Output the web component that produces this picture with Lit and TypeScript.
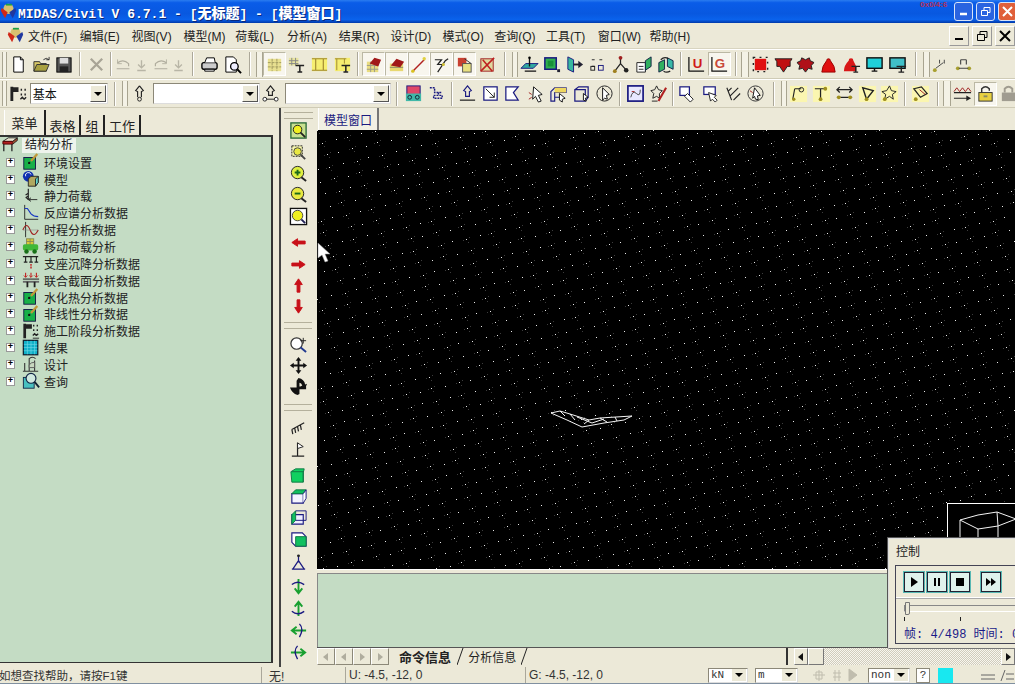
import {LitElement, css, html, svg} from 'lit';
import {customElement} from 'lit/decorators.js';

const BLUE = '#1a1a80';
const arrowPath = 'M3 10 9 6v2.500h8v3H9V14z';

// every icon lives in a 20x20 box
const icons: Record<string, unknown> = {
  doc: svg`<path d="M5 2h7l3 3v13H5z" fill="#fff" stroke="#000"/><path d="M12 2v3h3" fill="none" stroke="#000"/>`,
  open: svg`<path d="M2 7h6l1 2h6v8H2z" fill="#d8c868" stroke="#333"/><path d="M2 17l3-7h13l-3 7z" fill="#a8a040" stroke="#333"/><path d="M12 5q3-3 6 0m0-3v3h-3" fill="none" stroke="#333"/>`,
  save: svg`<rect x="3" y="3" width="15" height="15" fill="#555" stroke="#000"/><rect x="6" y="3" width="9" height="6" fill="#ddd"/><rect x="6" y="12" width="9" height="6" fill="#222"/>`,
  cut: svg`<path d="M4 4l12 12M16 4L4 16" stroke="#a8a496" stroke-width="2.400"/>`,
  undo: svg`<path d="M3 8q7-5 13 1v3M2 15h15" fill="none" stroke="#b0ad9e" stroke-width="1.400"/><path d="M3 4v5h5" fill="none" stroke="#b0ad9e"/>`,
  dn: svg`<path d="M10 5v8M6 10l4 4 4-4M5 17h10" fill="none" stroke="#b8b5a6" stroke-width="1.600"/>`,
  redo: svg`<path d="M17 8q-7-5-13 1v3M3 15h15" fill="none" stroke="#b0ad9e" stroke-width="1.400"/><path d="M17 4v5h-5" fill="none" stroke="#b0ad9e"/>`,
  print: svg`<rect x="2" y="8" width="16" height="7" rx="2" fill="#ccc" stroke="#000" stroke-width="1.400"/><path d="M5 8l2-5h8l1 5M5 15h10v2H5z" fill="#fff" stroke="#000"/>`,
  preview: svg`<path d="M3 2h8l3 3v13H3z" fill="#fff" stroke="#000"/><circle cx="12" cy="12" r="4" fill="#eef" stroke="#000" stroke-width="1.400"/><path d="M15 15l4 4" stroke="#000" stroke-width="2"/>`,
  grid1: svg`<path d="M3 4h14v13H3z" fill="#e8e090"/><path d="M3 8h14M3 12.500h14M7.500 4v13M12.500 4v13" stroke="#a09a60" stroke-dasharray="3 1"/>`,
  gridT: svg`<path d="M2 3h10v8H2z" fill="#e8e4a0"/><path d="M2 6h10M2 9h10M5 3v8M9 3v8" stroke="#888"/><path d="M9 11h9M13.500 11v7M11 18h5" stroke="#222" stroke-width="1.600"/>`,
  frame1: svg`<rect x="2" y="3" width="16" height="14" fill="#f6ee70"/><path d="M2 4h16M2 16h16M6 4v12M14 4v12" stroke="#a08830" stroke-width="1.200"/>`,
  frameT: svg`<rect x="2" y="3" width="16" height="14" fill="#f6ee70"/><path d="M2 4h12M4 4v12M12 4v5" stroke="#a08830"/><path d="M9 11h9M13.500 11v7M11 18h5" stroke="#222" stroke-width="1.600"/>`,
  redgrid: svg`<path d="M3 7h12v11H3z" fill="#e8dc80"/><path d="M3 11h12M3 15h12M7 7v11M11 7v11" stroke="#998"/><path d="M6 9l5-6 7 2-3 7z" fill="#a01818"/>`,
  redgrid2: svg`<path d="M3 9h14v8H3z" fill="#e8d870"/><path d="M3 13h14" stroke="#886"/><path d="M4 11l6-7 8 3-4 6z" fill="#a01818"/>`,
  wand: svg`<path d="M4 17L16 5" stroke="#b02020" stroke-width="1.500"/><circle cx="4" cy="17" r="1.800" fill="#d8c020"/><circle cx="16" cy="4" r="1.800" fill="#e0d040"/>`,
  wand2: svg`<path d="M3 5h7l-4 5h6M6 18l8-12 3-2" fill="none" stroke="#222" stroke-width="1.300"/><circle cx="12" cy="10" r="1.600" fill="#d0c030"/>`,
  boxT: svg`<rect x="3" y="3" width="9" height="9" fill="#c84030"/><rect x="8" y="9" width="9" height="9" fill="#e8e080" stroke="#555"/><path d="M10 4l7 5" stroke="#333"/>`,
  boxX: svg`<rect x="3" y="4" width="13" height="13" fill="#e0d8a0" stroke="#a02020"/><path d="M3 17L17 3M5 5l10 12" stroke="#c02020" stroke-width="1.600"/>`,
  plane: svg`<path d="M1 14l5-5h13l-5 5z" fill="#30a8a0" stroke="${BLUE}"/><path d="M10 2v10M5 17h12" stroke="#111" stroke-width="1.400"/><circle cx="10" cy="3" r="1.300"/>`,
  cubeG: svg`<rect x="3" y="3" width="12" height="12" fill="#30b050" stroke="${BLUE}" stroke-width="1.600"/><rect x="6" y="6" width="6" height="6" fill="#189038"/><rect x="16" y="15" width="3" height="3" fill="#223"/>`,
  prism: svg`<path d="M3 2l6 3v13l-6-3z" fill="#38b8a0" stroke="${BLUE}"/><path d="M9 10h6" stroke="#222" stroke-width="2"/><path d="M14 6l5 4-5 4z" fill="#223"/>`,
  dots: svg`<path d="M4 5h3M12 5h3M4 12h3" stroke="#333" stroke-width="1.300"/><rect x="3" y="12" width="4" height="4" fill="none" stroke="#222"/><rect x="11" y="11" width="5" height="5" fill="none" stroke="${BLUE}"/>`,
  tree3: svg`<path d="M10 3v6M10 9l-6 8M10 9l7 8" stroke="#222" stroke-width="1.300"/><circle cx="10" cy="3" r="2" fill="#a02020"/><circle cx="4" cy="17" r="2" fill="#a08020"/><circle cx="16" cy="16" r="2.400" fill="#222"/>`,
  docG: svg`<path d="M3 8h9v10H3z" fill="#fff" stroke="#222"/><path d="M5 12h5M5 15h5" stroke="#222"/><path d="M12 6l6-4v10l-6 4z" fill="#30b060" stroke="#124"/>`,
  cubeRot: svg`<path d="M3 8l6-3v10l-6 3z" fill="#30b060" stroke="#124"/><path d="M12 3l6 3v9l-6-3z" fill="#38b8a8" stroke="#124"/><path d="M5 5q4-4 8-1M15 17q-4 2-7 0" fill="none" stroke="#222" stroke-width="1.300"/>`,
  U: svg`<path d="M2 2v15h16" fill="none" stroke="#111" stroke-width="1.300"/><text x="6" y="14" font-family="Liberation Sans" font-weight="700" font-size="14" fill="#d01818">U</text>`,
  G: svg`<path d="M2 2v15h16" fill="none" stroke="#111" stroke-width="1.300"/><text x="5" y="14" font-family="Liberation Sans" font-weight="700" font-size="14" fill="#c84838">G</text>`,
  redSq: svg`<rect x="4" y="4" width="12" height="12" fill="#e01010"/><path d="M2.500 2.500h15v15h-15z" fill="none" stroke="#222" stroke-width="1.500" stroke-dasharray="2 4.500"/>`,
  redArrow: svg`<path d="M1 4h18l-2 3v5h-3l-4 6-4-6H3V7z" fill="#c01010" stroke="#222"/>`,
  redBurst: svg`<path d="M1 8l4-2 1-3 4 2 4-2 1 3 4 2-3 3 1 4-4-1-3 4-3-4-4 1 1-4z" fill="#b01018" stroke="#222"/>`,
  bell: svg`<path d="M8 6a2 2 0 0 1 4 0q5 6 5 12H3q0-6 5-12z" fill="#e01010" stroke="#900"/>`,
  bellT: svg`<path d="M7 6a2.500 2.500 0 0 1 5 0l3 6v5H2q0-6 5-11z" fill="#d81818"/><path d="M10 12h9M14.500 12v6M12 18h5" stroke="#222" stroke-width="1.500"/>`,
  screen: svg`<rect x="2" y="3" width="16" height="11" fill="#20d0d8" stroke="#111" stroke-width="1.500"/><path d="M7 17h6M10 14v3" stroke="#111" stroke-width="1.500"/>`,
  screenT: svg`<rect x="2" y="3" width="16" height="11" fill="#40c0c8" stroke="#111" stroke-width="1.500"/><path d="M9 12h10M14 12v6M11 18h6" stroke="#222" stroke-width="1.500"/>`,
  link1: svg`<circle cx="4" cy="16" r="2" fill="#a8a030"/><path d="M5 14l8-6M9 5v4M14 5v4" stroke="#444"/>`,
  link2: svg`<circle cx="4" cy="14" r="2" fill="#a8a030"/><circle cx="16" cy="14" r="2" fill="#a8a030"/><path d="M5 14h10M7 5v5M13 5v5M7 5h6" stroke="#444" stroke-width="1.200"/>`,
  hframe: svg`<path d="M3 3v15M3 7h7M3 5h7" stroke="#222" stroke-width="3"/><path d="M13 5v2M17 5v2M13 10v2M17 10v2M12 16l2-2 2 2M16 16l2-2" stroke="#222" stroke-width="1.500" fill="none"/>`,
  nodeArrow: svg`<path d="M10 2l4 5-2 1v6M10 2L6 7l2 1v6" fill="none" stroke="#222" stroke-width="1.200"/><circle cx="10" cy="16" r="2" fill="none" stroke="#222"/>`,
  nodes: svg`<path d="M10 2l4 5-2 1v4H8V8L6 7z" fill="none" stroke="#222" stroke-width="1.200"/><path d="M5 16h10" stroke="#222"/><circle cx="4" cy="16" r="2" fill="#fff" stroke="#222"/><circle cx="16" cy="16" r="2" fill="#fff" stroke="#222"/>`,
  dualG: svg`<rect x="3" y="2" width="14" height="9" fill="#e04868" stroke="${BLUE}"/><rect x="2" y="10" width="16" height="8" fill="#40b8a8"/><circle cx="6" cy="14" r="2" fill="none" stroke="#123"/><circle cx="14" cy="14" r="2" fill="none" stroke="#123"/>`,
  tree: svg`<path d="M3 4h5v5h8M12 9v3M7 12h9v3H7z" fill="none" stroke="${BLUE}" stroke-width="1.500" stroke-dasharray="2 1"/>`,
  nodeB: svg`<path d="M10 2l4 5-2 1v5H8V8L6 7z" fill="none" stroke="${BLUE}" stroke-width="1.200"/><path d="M2 17h16" stroke="#222" stroke-width="1.300"/>`,
  boxArrow: svg`<rect x="3" y="3" width="14" height="14" fill="#fff" stroke="${BLUE}" stroke-width="1.300"/><path d="M5 5l9 9M14 9v5H9" fill="none" stroke="#222"/>`,
  flag: svg`<path d="M3 3h13l-5 6 5 8H3z" fill="#fff" stroke="${BLUE}" stroke-width="1.300"/>`,
  cur: svg`<path d="M8 3l9 8-4 1 3 6-3 1-3-6-3 3z" fill="#fff" stroke="#111"/><path d="M3 9l3 2M3 16l3-2" stroke="#a02020"/>`,
  boxes: svg`<path d="M2 8l4-4h12v5H6v9H2zM6 9v5h6" fill="none" stroke="${BLUE}" stroke-width="1.200"/><path d="M6 4h12v5H6z" fill="#f0d860"/><path d="M11 10l6 5-3 1v3l-3-2z" fill="#fff" stroke="#111"/>`,
  cube: svg`<path d="M3 6h11v12H3zM3 6l4-3h10v11l-3 4" fill="none" stroke="${BLUE}" stroke-width="1.300"/><path d="M12 10l5 4-3 1 1 3-3-1z" fill="#fff" stroke="#111"/>`,
  circCur: svg`<circle cx="10" cy="10" r="8" fill="none" stroke="#222"/><path d="M8 4l7 7-3 1 1 4-3-1-2 2z" fill="#fff" stroke="#111"/>`,
  pen: svg`<rect x="2" y="2" width="16" height="16" fill="#e8e8ff" stroke="${BLUE}" stroke-width="1.800"/><path d="M5 14q2-8 6-4t4-4" fill="none" stroke="#444"/><path d="M6 8h3" stroke="#a02020"/>`,
  penStar: svg`<path d="M8 2l2 4 4 1-3 3v5l-3-2-4 2 1-5-3-3 4-1z" fill="none" stroke="#222"/><path d="M10 18L18 4" stroke="#b02020" stroke-width="2.200"/><path d="M3 18h6" stroke="#222"/>`,
  sq1: svg`<rect x="2" y="3" width="10" height="9" fill="#fff" stroke="${BLUE}" stroke-width="1.300"/><path d="M10 10l6 6-3 3-6-6z" fill="#fff" stroke="#222"/>`,
  sq2: svg`<rect x="3" y="3" width="12" height="8" fill="#fff" stroke="${BLUE}" stroke-width="1.300"/><path d="M8 9l8 3-2 2 3 3-2 2-3-3-2 2z" fill="#fff" stroke="#222"/>`,
  pins: svg`<path d="M4 8l4-4M6 13l9-9M10 17l7-7M3 4l5 13" stroke="#222" stroke-width="1.200" fill="none"/>`,
  circDot: svg`<circle cx="10" cy="10" r="8" fill="none" stroke="#333"/><path d="M9 4l6 8-3 .5 1 4-3-.5-1-3-2 2z" fill="#fff" stroke="#111"/><path d="M4 7l3 2" stroke="#a02020"/>`,
  yl1: svg`<rect x="1" y="2" width="18" height="17" fill="#fbf6b0"/><path d="M4 16l2-11M6 5h7" stroke="#222" stroke-width="1.200"/><circle cx="13" cy="6" r="2.400" fill="none" stroke="#222"/><circle cx="5" cy="16" r="1.800" fill="#a09020"/>`,
  yl2: svg`<rect x="1" y="2" width="18" height="17" fill="#fbf6b0"/><path d="M3 5h10M9 5v10" stroke="#222" stroke-width="1.300"/><circle cx="14" cy="5" r="2" fill="#a09020"/><circle cx="9" cy="16" r="2" fill="#a09020"/>`,
  arrows2: svg`<path d="M2 6h16M2 14h16M5 3L2 6l3 3M15 3l3 3-3 3" fill="none" stroke="#222" stroke-width="1.300"/><circle cx="4" cy="14" r="2" fill="#a09020"/><circle cx="16" cy="14" r="2" fill="#a09020"/>`,
  yl3: svg`<rect x="1" y="2" width="18" height="17" fill="#fbf6b0"/><path d="M5 4l4 12 7-9z" fill="none" stroke="#222" stroke-width="1.500"/><circle cx="9" cy="16" r="2" fill="#a09020"/>`,
  yl4: svg`<rect x="1" y="2" width="18" height="17" fill="#fbf6b0"/><path d="M10 2l2 5 5 1-4 3 1 5-4-3-5 3 1-5-4-3 5-1z" fill="none" stroke="#222"/><circle cx="5" cy="16" r="2" fill="#a09020"/>`,
  yl5: svg`<rect x="1" y="2" width="18" height="17" fill="#fbf6b0"/><path d="M3 5l8-2 6 7-7 4z" fill="none" stroke="#222" stroke-width="1.300"/><circle cx="5" cy="16" r="2" fill="#a09020"/><path d="M9 6l6 5" stroke="#a02020"/>`,
  waves: svg`<path d="M1 8l3-4 3 4 3-4 3 4 3-4 3 4" fill="none" stroke="#a02020"/><path d="M1 9h18M1 15h15" stroke="#222" stroke-width="1.300"/><path d="M14 12l5 3-5 3z" fill="#222"/>`,
  lock: svg`<rect x="3" y="9" width="14" height="9" fill="#e8d040" stroke="#333"/><path d="M6 9V5q4-4 8 0v2" fill="none" stroke="#333" stroke-width="1.500"/><rect x="8" y="12" width="4" height="2" fill="#886"/>`,
  lockG: svg`<rect x="3" y="9" width="14" height="9" fill="#a09c90"/><path d="M6 9V5q4-4 8 0v4" fill="none" stroke="#a09c90" stroke-width="2"/>`,

  zoomFit: svg`<rect x="2" y="2" width="16" height="16" fill="#c8e090" stroke="#286838" stroke-width="1.400"/><circle cx="9" cy="9" r="4.500" fill="#f0f020" stroke="#222"/><path d="M12 12l5 5" stroke="#222" stroke-width="2"/>`,
  zoomWin: svg`<rect x="3" y="3" width="11" height="11" fill="#f8f8b0" stroke="#222" stroke-dasharray="2 1"/><circle cx="9" cy="9" r="4" fill="#e8e840" stroke="#444"/><path d="M12 12l5 5" stroke="#444" stroke-width="2"/>`,
  zoomIn: svg`<circle cx="9" cy="9" r="6.500" fill="#e0f040" stroke="#222"/><path d="M6 9h6M9 6v6" stroke="#186818" stroke-width="2"/><path d="M13 14l5 4" stroke="#222" stroke-width="2"/>`,
  zoomOut: svg`<circle cx="9" cy="9" r="6.500" fill="#e8e840" stroke="#222"/><path d="M6 9h6" stroke="#186818" stroke-width="2"/><path d="M13 14l5 4" stroke="#222" stroke-width="2"/>`,
  zoomAll: svg`<rect x="1.500" y="1.500" width="17" height="17" fill="#fff" stroke="#111" stroke-width="1.400"/><circle cx="9" cy="9" r="5.500" fill="#f0f020" stroke="#444"/><path d="M13 13l4 4" stroke="#225" stroke-width="2"/>`,
  aLeft: svg`<path d="${arrowPath}" fill="#c81018" stroke="#c81018"/>`,
  aRight: svg`<path d="${arrowPath}" fill="#c81018" stroke="#c81018" transform="rotate(180 10 10)"/>`,
  aUp: svg`<path d="${arrowPath}" fill="#c81018" stroke="#c81018" transform="rotate(90 10 10)"/>`,
  aDown: svg`<path d="${arrowPath}" fill="#c81018" stroke="#c81018" transform="rotate(-90 10 10)"/>`,
  zoomPlus: svg`<circle cx="8" cy="9" r="6" fill="#fff" stroke="#333" stroke-width="1.300"/><path d="M12 13l6 5" stroke="#223a90" stroke-width="2"/><path d="M15 3v6M12 6h6" stroke="#222"/>`,
  pan: svg`<path d="M10 1l3 4h-2v4h4V7l4 3-4 3v-2h-4v4h2l-3 4-3-4h2v-4H5v2l-4-3 4-3v2h4V5H7z" fill="#111"/>`,
  rotate: svg`<path d="M10 1q6 1 7 7l2-1-2 5-5-2 2-1q-1-3-3-3v4h7v3h-7v5l-2 1q-6-2-8-8h7V4z" fill="#111"/>`,
  brush: svg`<path d="M3 11l13-7M3 11l1 5M6 9.500l1 5M9 8l1 5M12 6.500l1 5" stroke="#222" stroke-width="1.300"/>`,
  flagBase: svg`<path d="M9 3v14M3 17h13" stroke="#222" stroke-width="1.300"/><path d="M9 3l6 4-6 2z" fill="#fff" stroke="#222"/>`,
  cubeFull: svg`<path d="M2 6l5-3h9l-1 4v10H3z" fill="#10d060" stroke="#174"/><path d="M3 6h12v11" fill="none" stroke="#174"/>`,
  cubeTop: svg`<path d="M3 7h12v10H3z" fill="#f4f4ff" stroke="${BLUE}" stroke-width="1.200"/><path d="M3 7l4-4h11l-3 4z" fill="#10c060" stroke="#174"/><path d="M15 7l3-4v9l-3 5" fill="#fff" stroke="${BLUE}"/>`,
  cubeSide: svg`<path d="M3 7h12v10H3z" fill="#eef" stroke="${BLUE}" stroke-width="1.200"/><path d="M3 7l4-4v10l-4 4z" fill="#10c060" stroke="#174"/><path d="M7 3h11v10H7" fill="none" stroke="${BLUE}"/>`,
  cubeFront: svg`<path d="M3 3h11l4 4v10H7l-4-4z" fill="#fff" stroke="${BLUE}" stroke-width="1.200"/><path d="M7 7h11v10H7z" fill="#10c060" stroke="#174"/>`,
  person: svg`<path d="M10 2v8M10 8l-6 9M10 8l6 9M3 17h14" fill="none" stroke="${BLUE}" stroke-width="1.300"/><circle cx="10" cy="3" r="1.500" fill="#222"/>`,
  axisG1: svg`<path d="M10 2v14M6 12l4 5 4-5" fill="none" stroke="#18a030" stroke-width="2"/><path d="M3 8q6-5 13 0" fill="none" stroke="${BLUE}" stroke-width="1.400"/>`,
  axisG2: svg`<path d="M10 18V4M6 8l4-5 4 5" fill="none" stroke="#18a030" stroke-width="2"/><path d="M3 13q6 5 13 0" fill="none" stroke="${BLUE}" stroke-width="1.400"/>`,
  axisG3: svg`<path d="M18 10H4M8 6l-5 4 5 4" fill="none" stroke="#18a030" stroke-width="2"/><path d="M11 3q5 5 0 14" fill="none" stroke="${BLUE}" stroke-width="1.400"/>`,
  axisG4: svg`<path d="M2 10h14M12 6l5 4-5 4" fill="none" stroke="#18a030" stroke-width="2"/><path d="M9 3q-5 5 0 14" fill="none" stroke="${BLUE}" stroke-width="1.400"/>`,

  // tree icons
  tStruct: svg`<path d="M1 6l6-4h10l-5 4z" fill="#e8e4d0" stroke="#222"/><path d="M1 6h11v3H1z" fill="#b02020" stroke="#500"/><path d="M2 9v8M11 9v8" stroke="#222" stroke-width="1.400"/><path d="M12 6l5-4v3l-5 4" fill="#a05030" stroke="#222"/>`,
  tEnv: svg`<rect x="2" y="5" width="13" height="13" fill="#18b048" stroke="#114"/><circle cx="8" cy="11" r="1.300" fill="#111"/><path d="M10 9l7-8" stroke="#c09838" stroke-width="2.500"/>`,
  tModel: svg`<circle cx="7" cy="7" r="6" fill="#1030b0"/><path d="M4 7a3 3 0 0 1 6-2" fill="none" stroke="#fff"/><path d="M7 10l3-3h8v7l-3 4H7z" fill="#b0a860" stroke="#222"/><path d="M15 10v8l3-4V7z" fill="#60d8d0" stroke="#222"/>`,
  tStatic: svg`<path d="M7 2v12M4 9l3-2M4 12l3-2M7 14l-2-2" stroke="#222" stroke-width="1.300" fill="none"/><path d="M7 14h10" stroke="#222"/><path d="M10 12l-3 2 3 2" fill="none" stroke="#222"/>`,
  tSpec: svg`<path d="M3 1v16h15" fill="none" stroke="#222"/><path d="M3 5h3l4 6q3 3 8 3" fill="none" stroke="#1838c0" stroke-width="1.300"/>`,
  tTime: svg`<path d="M4 1v17" stroke="#222"/><path d="M1 10q4-10 8 0t9 0" fill="none" stroke="#a02020" stroke-width="1.300"/><path d="M1 10h17" stroke="#888" stroke-width=".6"/>`,
  tMove: svg`<rect x="5" y="2" width="8" height="7" fill="#d8c838" stroke="#885"/><path d="M5 5h8M9 2v7" stroke="#885"/><rect x="1" y="8" width="17" height="7" rx="2" fill="#40b838"/><circle cx="5" cy="16" r="2.500" fill="#187018"/><circle cx="14" cy="16" r="2.500" fill="#187018"/>`,
  tSettle: svg`<path d="M1 3h17M4 3v6M10 3v6M16 3v6M2 9h4M8 9h4M14 9h4" stroke="#222" stroke-width="1.300"/><path d="M10 11v5" stroke="#c02020" stroke-width="1.600" stroke-dasharray="2 1"/>`,
  tComp: svg`<path d="M4 2v5M10 2v5M16 2v5" stroke="#c02020" stroke-width="1.200"/><path d="M2 5l2 2 2-2M8 5l2 2 2-2M14 5l2 2 2-2" fill="none" stroke="#c02020"/><path d="M1 9h18" stroke="#444" stroke-width="1.400"/><path d="M1 12h18" stroke="#666" stroke-width="2"/><path d="M6 12v6M14 12v6" stroke="#222" stroke-width="2"/>`,
  tStage: svg`<path d="M3 2v16M3 6h8M3 4h8" stroke="#222" stroke-width="3"/><path d="M13 3v2M17 3v2M13 8v2M17 8v2M12 15l2-2 2 2M16 15l2-2" stroke="#222" stroke-width="1.500" fill="none"/><path d="M12 18h7" stroke="#222"/>`,
  tResult: svg`<rect x="1.500" y="1.500" width="16" height="16" fill="#10b0c8" stroke="#123" stroke-width="1.400"/><path d="M2 6h15M2 9.500h15M2 13h15M6 2v15M10 2v15M14 2v15" stroke="#70d8e8" stroke-width=".7"/>`,
  tDesign: svg`<path d="M1 18h17M3 18V9M8 18V4q4-3 7 0M14 18V6" fill="none" stroke="#333" stroke-width="1.200"/><path d="M8 11q2-3 6-3v6H8z" fill="#c8d8c0" stroke="#555"/>`,
  tQuery: svg`<rect x="1.500" y="6" width="12" height="12" fill="#48c0c0" stroke="#124"/><circle cx="10" cy="7" r="5.500" fill="#d0e8e0" stroke="#124" stroke-width="1.300"/><path d="M14 11l5 6" stroke="#123" stroke-width="2"/>`,
  logo: svg`<circle cx="10" cy="7" r="6" fill="#d8c070"/><path d="M2 6l7 5-3 7-5-9z" fill="#d02818"/><path d="M18 6l-7 5 4 7 4-9z" fill="#2038a0"/><path d="M7 2h7" stroke="#18a048" stroke-width="2"/>`,
};

const icon = (name: string, size = 18) =>
  html`<svg width=${size} height=${size} viewBox="0 0 20 20">${icons[name]}</svg>`;

const row1 = ['grip:5', 'doc', 'open', 'save', 'sep:10', 'cut', 'sep:6', 'undo~', 'dn~', 'redo~', 'dn~', 'sep:10', 'print', 'preview', 'sep:12',
  'grip:7', 'grid1*', 'gridT', 'frame1', 'frameT', 'sep:8', 'redgrid*', 'redgrid2*', 'wand*', 'wand2*', 'boxT*', 'boxX', 'sep:13',
  'grip:6', 'plane', 'cubeG', 'prism', 'dots', 'tree3', 'docG', 'cubeRot', 'sep:8', 'U', 'G*', 'sep:10',
  'grip:8', 'redSq', 'redArrow', 'redBurst', 'bell', 'bellT', 'screen', 'screenT', 'sep:14', 'grip:7', 'link1', 'link2'];

const row2 = ['grip:5', 'hframe', 'sel:78:基本', 'sep:14', 'grip:6', 'nodeArrow', 'gap:2', 'sel:107:', 'nodes', 'gap:3', 'sel:106:', 'sep:11',
  'dualG', 'tree', 'sep:8', 'nodeB', 'boxArrow', 'flag', 'cur', 'boxes', 'cube', 'circCur', 'sep:9', 'pen', 'penStar', 'sep:6',
  'sq1', 'sq2', 'pins', 'circDot', 'sep:14', 'grip:6', 'yl1', 'yl2', 'arrows2', 'yl3', 'yl4', 'sep:8', 'yl5', 'sep:11',
  'grip:8', 'waves', 'lock*', 'lockG'];

const menus = [['文件', 'F'], ['编辑', 'E'], ['视图', 'V'], ['模型', 'M'], ['荷载', 'L'], ['分析', 'A'], ['结果', 'R'], ['设计', 'D'], ['模式', 'O'], ['查询', 'Q'], ['工具', 'T'], ['窗口', 'W'], ['帮助', 'H']];

const treeRows = [['tEnv', '环境设置'], ['tModel', '模型'], ['tStatic', '静力荷载'], ['tSpec', '反应谱分析数据'], ['tTime', '时程分析数据'], ['tMove', '移动荷载分析'], ['tSettle', '支座沉降分析数据'], ['tComp', '联合截面分析数据'], ['tEnv', '水化热分析数据'], ['tEnv', '非线性分析数据'], ['tStage', '施工阶段分析数据'], ['tResult', '结果'], ['tDesign', '设计'], ['tQuery', '查询']];

// vertical toolbar: icon names, "gap:n" for blank space, "grip:n" for a band break
const sideBar = ['zoomFit', 'zoomWin', 'zoomIn', 'zoomOut', 'zoomAll', 'gap:5', 'aLeft', 'aRight', 'aUp', 'aDown', 'grip:16', 'zoomPlus', 'pan', 'rotate', 'grip:20',
  'brush', 'flagBase', 'gap:4', 'cubeFull', 'cubeTop', 'cubeSide', 'cubeFront', 'gap:2', 'person', 'gap:2', 'axisG1', 'gap:1', 'axisG2', 'gap:1', 'axisG3', 'axisG4'];

// the drawing grid: a skewed lattice with a little jitter, bright points plus dim compression specks
function gridDots() {
  let bright = '';
  let dim = '';
  for (let j = -30; j < 60; j++) {
    for (let i = -30; i < 80; i++) {
      const x = 13 * i + 4 * j + ((i * 7 + j * 13) % 3);
      const y = 12 * j - 3 * i + ((i * 5 + j * 3) % 2);
      if (x < 0 || y < 0 || x > 700 || y > 440) continue;
      bright += `M${x} ${y}h1v1h-1z`;
      if ((i + j * 2) % 2 === 0) dim += `M${x + 2} ${y + 3}h1v1h-1zM${x - 3} ${y + 1}h1v1h-1zM${x + 3} ${y - 2}h1v1h-1z`;
    }
  }
  return {bright, dim};
}
const dots = gridDots();

@customElement('app-root')
export class AppRoot extends LitElement {
  static styles = css`
    :host {
      display: block;
      font-family: 'Liberation Sans', 'Noto Sans CJK SC', sans-serif;
      font-size: 12px;
      color: #111;
    }
    svg { display: block; }
    .app {
      position: relative;
      width: 1015px;
      height: 684px;
      overflow: hidden;
      display: flex;
      flex-direction: column;
      background: #ece9d8;
    }
    .title {
      height: 23px;
      flex: none;
      display: flex;
      align-items: center;
      gap: 1px;
      background: linear-gradient(#2a7cf0 0, #0a5ce8 12%, #0858e0 60%, #0a62ec 85%, #0038a8 100%);
      color: #fff;
      font: 700 13px 'Liberation Mono', 'Noto Sans CJK SC', monospace;
      white-space: pre;
      text-shadow: 1px 1px 0 #0a2a80;
    }
    .title b { font-size: 14px; font-family: 'Noto Sans CJK SC', sans-serif; }
    .title .wins { margin-left: auto; display: flex; gap: 3px; padding: 0 0 1px; }
    .wbtn {
      width: 19px;
      height: 19px;
      box-sizing: border-box;
      border: 1px solid #d8e4f8;
      border-radius: 3px;
      background: #2a64e0;
      display: flex;
      align-items: center;
      justify-content: center;
    }
    .wbtn.close { background: #e0603a; margin-right: -2px; }
    .stamp {
      position: absolute;
      left: 920px;
      top: 0;
      color: #b03058;
      font: 700 8px 'Liberation Sans', sans-serif;
      text-shadow: none;
    }
    .menu {
      height: 26px;
      flex: none;
      display: flex;
      align-items: center;
      padding-left: 7px;
      box-sizing: border-box;
      border-bottom: 1px solid #d8d4c0;
      font-size: 12px;
    }
    .menu .logo { width: 21px; flex: none; }
    .menu span.m { width: 51.8px; flex: none; color: #222; white-space: nowrap; }
    .mdi { margin-left: auto; display: flex; gap: 3px; }
    .mbtn {
      width: 20px;
      height: 20px;
      box-sizing: border-box;
      border: 1px solid #fff;
      border-right-color: #999;
      border-bottom-color: #999;
      display: flex;
      align-items: center;
      justify-content: center;
    }
    .bar {
      flex: none;
      display: flex;
      align-items: center;
      padding-left: 2px;
      border-bottom: 1px solid #cfcbb6;
      box-sizing: border-box;
      border-top: 1px solid #fff;
    }
    .bar.one { height: 30px; }
    .bar.two { height: 29px; }
    .btn {
      width: 22.8px;
      height: 24px;
      flex: none;
      display: flex;
      align-items: center;
      justify-content: center;
      box-sizing: border-box;
    }
    .btn.small { width: 18.500px; }
    .btn.on { background: #f8f6ee; border: 1px solid #bbb8a4; border-right-color: #fff; border-bottom-color: #fff; }
    .sep { flex: none; height: 24px; display: flex; justify-content: center; }
    .sep::after { content: ''; width: 1px; background: #aca899; border-right: 1px solid #fff; }
    .grip {
      flex: none;
      height: 25px;
      box-sizing: border-box;
      border-left: 1px solid #a8a490;
      border-right: 1px solid #a8a490;
      background: #f4f2e6;
    }
    .combo {
      flex: none;
      height: 21px;
      box-sizing: border-box;
      background: #fff;
      border: 1px solid #8c8878;
      border-right-color: #ddd;
      border-bottom-color: #ddd;
      display: flex;
      align-items: center;
      justify-content: space-between;
      padding-left: 2px;
      font-size: 12px;
      overflow: hidden;
    }
    .drop {
      width: 16px;
      height: 17px;
      margin-right: 1px;
      flex: none;
      background: #ece9d8;
      border: 1px solid #fff;
      border-right-color: #555;
      border-bottom-color: #555;
      box-sizing: border-box;
      display: flex;
      align-items: center;
      justify-content: center;
    }
    .drop::after {
      content: '';
      border: 4px solid transparent;
      border-top: 4px solid #000;
      border-bottom: 0;
    }
    .main { flex: 1; display: flex; min-height: 0; }
    .left { width: 281px; flex: none; box-sizing: border-box; border-right: 2px solid #444; display: flex; flex-direction: column; }
    .tabs { height: 27px; flex: none; display: flex; align-items: flex-end; font-size: 13px; color: #222; }
    .tab { height: 20px; display: flex; align-items: center; justify-content: center; border-right: 2px solid #222; box-sizing: border-box; flex: none; }
    .tab.active { height: 25px; background: #efeddf; border-left: 1px solid #fff; }
    .treeBox {
      width: 273px;
      height: 528px;
      box-sizing: border-box;
      background: #c4dcc4;
      border: 1px solid #333;
      border-left: 0;
      border-right-width: 2px;
      border-top-width: 2px;
      display: grid;
      grid-auto-rows: 16.85px;
      align-content: start;
    }
    .node { display: flex; align-items: center; padding-left: 6px; font-size: 12px; color: #222; }
    .node.root { padding-left: 2px; }
    .node.root span { background: #eef4ec; padding: 0 3px; margin-left: 2px; line-height: 15px; }
    .exp {
      width: 9px;
      height: 9px;
      flex: none;
      box-sizing: border-box;
      background: #fff;
      border: 1px solid #999;
      display: flex;
      align-items: center;
      justify-content: center;
      margin-right: 7px;
      color: #000;
      font: 700 9px/1 'Liberation Mono', monospace;
    }
    .node .label { margin-left: 4px; }
    .side { width: 36px; flex: none; display: flex; flex-direction: column; padding: 4px 2px 0 0; box-sizing: border-box; }
    .side .vgrip { width: 29px; height: 5px; margin: 0 auto 1px; border: 1px solid #b4b09c; border-left: 0; border-right: 0; flex: none; }
    .side .it { height: 21.400px; flex: none; display: flex; align-items: center; justify-content: center; }
    .side .band { flex: none; display: flex; align-items: center; justify-content: center; }
    .side .band::after { content: ''; width: 28px; height: 5px; border: 1px solid #b4b09c; border-left: 0; border-right: 0; }
    .work { flex: 1; min-width: 0; display: flex; flex-direction: column; }
    .docTabs { height: 22px; flex: none; display: flex; padding-left: 1px; }
    .docTab {
      width: 61px;
      box-sizing: border-box;
      border-right: 2px solid #777;
      color: #1a1a80;
      font-size: 12px;
      display: flex;
      align-items: center;
      justify-content: center;
      background: #f2f0e4;
      border-left: 1px solid #fff;
    }
    .canvas {
      height: 439px;
      flex: none;
      position: relative;
      overflow: hidden;
      background: #000;
    }
    .gridDots { position: absolute; left: 0; top: 0; }
    .model { position: absolute; left: 233px; top: 275px; }
    .cursor { position: absolute; left: 0; top: 112px; }
    .navCube { position: absolute; left: 630px; top: 373px; width: 90px; height: 64px; border: 1px solid #fff; box-sizing: border-box; background: #000; }
    .splitter { height: 5px; flex: none; background: #ece9d8; border-top: 1px solid #fff; box-sizing: border-box; border-bottom: 1px solid #888; }
    .cmd { height: 73px; flex: none; background: #c4dcc4; border-left: 1px solid #888; box-sizing: border-box; }
    .tabRow { height: 18px; flex: none; display: flex; align-items: stretch; border-top: 1px solid #555; box-sizing: border-box; font-size: 12px; }
    .nav { width: 18px; box-sizing: border-box; flex: none; border: 1px solid #fff; border-right-color: #8c8878; border-bottom-color: #8c8878; display: flex; align-items: center; justify-content: center; }
    .sheet { flex: none; display: flex; align-items: center; color: #222; white-space: nowrap; }
    .sheet.active { font-weight: 700; font-size: 13px; margin-left: 10px; width: 58px; }
    .sheet.rest { width: 68px; font-size: 12px; }
    .slash { flex: none; width: 8px; }
    .fill { width: 257px; flex: none; border-right: 2px solid #333; }
    .hatch {
      flex: 1;
      background-color: #f4f2ea;
      background-image: repeating-conic-gradient(#d0ccbc 0 25%, #f8f6ee 0 50%);
      background-size: 2px 2px;
      display: flex;
      justify-content: flex-end;
    }
    .sbtn { width: 14px; flex: none; background: #ece9d8; border: 1px solid #fff; border-right-color: #777; border-bottom-color: #777; box-sizing: border-box; display: flex; align-items: center; justify-content: center; }
    .under { height: 2px; flex: none; }
    .status {
      height: 17px;
      flex: none;
      display: flex;
      align-items: center;
      border-bottom: 1px solid #8090a0;
      box-sizing: border-box;
      color: #333;
      font-size: 12px;
      position: relative;
    }
    .cell { flex: none; height: 100%; box-sizing: border-box; border-left: 1px solid #aaa79a; padding-left: 3px; white-space: nowrap; display: flex; align-items: center; overflow: hidden; }
    .help { flex: none; width: 262px; margin-left: -1px; white-space: nowrap; font-size: 11.500px; }
    .status .combo { height: 15px; font-family: 'Liberation Mono', monospace; font-size: 11px; }
    .status .drop { width: 14px; height: 12px; border: 0; }
    .qm { width: 14px; height: 15px; flex: none; box-sizing: border-box; border: 1px solid #8c8878; background: #fff; text-align: center; line-height: 13px; font-size: 11px; font-family: 'Liberation Mono', monospace; }
    .swatch { width: 15px; height: 15px; flex: none; background: #18e8f0; }
    .panel {
      position: absolute;
      left: 888px;
      top: 538px;
      width: 200px;
      height: 111px;
      background: #ece9d8;
      border: 1px solid #777;
      border-top-color: #ddd;
      border-left-color: #ddd;
      box-sizing: border-box;
      padding: 4px 6px;
      display: flex;
      flex-direction: column;
      box-shadow: -1px -1px 0 #555;
    }
    .panel h4 { margin: 0; font-weight: 400; font-size: 12px; height: 24px; line-height: 18px; padding-left: 1px; color: #222; }
    .inner { flex: 1; border: 1px solid #445; box-sizing: border-box; padding: 1px 8px; display: flex; flex-direction: column; }
    .ctrls { display: flex; gap: 1px; height: 30px; align-items: center; padding-left: 8px; border-bottom: 1px solid #fff; box-shadow: 0 1px 0 #aaa; margin: 0 -8px; flex: none; }
    .pb { width: 20px; height: 20px; box-sizing: border-box; background: #dff2ec; border: 1px solid #223; outline: 1px solid #58b8b4; display: flex; align-items: center; justify-content: center; margin-right: 2px; }
    .pb.skip { margin-left: 8px; }
    .track { height: 5px; margin-top: 7px; border: 1px solid #888; border-right: 0; border-bottom-color: #fff; position: relative; flex: none; }
    .track::before { content: ''; position: absolute; left: 0; top: -4px; width: 3px; height: 11px; background: #ece9d8; border: 1px solid #777; border-radius: 0 0 2px 0; }
    .ticks { height: 6px; flex: none; margin-top: 5px; position: relative; }
    .ticks i { position: absolute; top: 0; width: 1px; height: 4px; background: #222; }
    .readout { margin-top: 1px; color: #1a1a88; font: 12px 'Liberation Mono', 'Noto Sans CJK SC', monospace; white-space: pre; }
  `;

  renderBar(items: string[]) {
    return items.map((item) => {
      const [kind, a, b] = item.split(':');
      if (kind === 'grip') return html`<div class="grip" style="width:${a}px"></div>`;
      if (kind === 'sep') return html`<div class="sep" style="width:${a}px"></div>`;
      if (kind === 'gap') return html`<div style="width:${a}px;flex:none"></div>`;
      if (kind === 'sel')
        return html`<div class="combo" style="width:${a}px"><span>${b}</span><div class="drop"></div></div>`;
      const on = kind.endsWith('*');
      const small = kind.endsWith('~');
      const name = on || small ? kind.slice(0, -1) : kind;
      return html`<div class="btn ${on ? 'on' : ''} ${small ? 'small' : ''}">${icon(name, small ? 17 : 19)}</div>`;
    });
  }

  renderTree() {
    return html`
      <div class="treeBox">
        <div class="node root">${icon('tStruct', 18)}<span>结构分析</span></div>
        ${treeRows.map(
          ([ic, label]) => html`<div class="node"><div class="exp">+</div>${icon(ic, 18)}<span class="label">${label}</span></div>`
        )}
      </div>
    `;
  }

  renderSide() {
    return html`
      <div class="side">
        <div class="vgrip"></div>
        ${sideBar.map((item) => {
          const [kind, n] = item.split(':');
          if (kind === 'gap') return html`<div style="height:${n}px;flex:none"></div>`;
          if (kind === 'grip') return html`<div class="band" style="height:${n}px"></div>`;
          return html`<div class="it">${icon(kind, 19)}</div>`;
        })}
      </div>
    `;
  }

  renderCanvas() {
    return html`
      <div class="canvas">
        <svg class="gridDots" width="698" height="439">
          <path d=${dots.dim} fill="#3c3c3c" />
          <path d=${dots.bright} fill="#e8e8e8" />
        </svg>
        <svg class="model" width="90" height="26" viewBox="0 0 90 26" fill="none" stroke="#f4f4f4" stroke-width="1">
          <path d="M1 8 10 6 20 9 39 15 50 13 82 11 74 15 54 18 32 22 17 15Z" />
          <path d="M10 6 15 11M20 9 25 15M39 15 34 19M50 13 57 17M65 12 67 16M27 12 42 18 54 14" />
        </svg>
        <svg class="cursor" width="14" height="22" viewBox="0 0 14 22">
          <path d="M1 1v15l4-3 3 7 3-1-3-7h5z" fill="#fff" stroke="#999" stroke-width=".5" />
        </svg>
        <div class="navCube">
          <svg width="88" height="62" viewBox="0 0 88 62" fill="none" stroke="#f4f4f4">
            <path d="M12 16 30 25 50 22 49 8 30 11 12 16V40M30 25V62M50 22V62M49 8 68 15V40M50 22 68 15" />
            <path d="M30 50 41 39M30 50h6M30 50v-6" stroke="#e8d050" stroke-width="1.500" />
          </svg>
        </div>
      </div>
    `;
  }

  renderBottom() {
    const arrow = (d: string, fill = '#111') =>
      html`<svg width="8" height="10" viewBox="0 0 8 10"><path d=${d} fill=${fill} /></svg>`;
    return html`
      <div class="splitter"></div>
      <div class="cmd"></div>
      <div class="tabRow">
        ${['M6 1 1 5l5 4z', 'M6 1 1 5l5 4z', 'M2 1l5 4-5 4z', 'M2 1l5 4-5 4z'].map(
          (d) => html`<div class="nav">${arrow(d, '#b0ad9e')}</div>`
        )}
        <div class="sheet active">命令信息</div>
        <svg class="slash" viewBox="0 0 8 17"><path d="M0 17 6 0" stroke="#222" fill="none" /></svg>
        <div class="sheet rest">&nbsp;分析信息</div>
        <svg class="slash" viewBox="0 0 8 17" style="margin-left:-12px"><path d="M0 17 6 0" stroke="#222" fill="none" /></svg>
        <div class="fill"></div>
        <div class="sbtn" style="margin-left:6px">${arrow('M6 1 1 5l5 4z')}</div>
        <div class="sbtn" style="width:16px"></div>
        <div class="hatch"><div class="sbtn">${arrow('M2 1l5 4-5 4z')}</div></div>
      </div>
      <div class="under"></div>
    `;
  }

  renderStatus() {
    return html`
      <div class="status">
        <div class="help">如想查找帮助，请按F1键</div>
        <div class="cell" style="width:84px;padding-left:7px">无!</div>
        <div class="cell" style="width:180px">U: -4.5, -12, 0</div>
        <div class="cell" style="width:183px">G: -4.5, -12, 0</div>
        <div class="combo" style="width:40px">kN<div class="drop"></div></div>
        <div style="width:7px;flex:none"></div>
        <div class="combo" style="width:43px">m<div class="drop"></div></div>
        <div style="width:11px;flex:none"></div>
        <svg width="50" height="15" viewBox="0 0 50 15" style="flex:none" fill="none" stroke="#c0bdae">
          <path d="M4 7h12M10 2v11M7 4h6v7H7zM26 2v11M30 2v11M24 5h8M24 9h8" />
          <path d="M40 1l8 6-8 6z" fill="#c0bdae" />
        </svg>
        <div style="width:9px;flex:none"></div>
        <div class="combo" style="width:42px">non<div class="drop"></div></div>
        <div style="width:6px;flex:none"></div>
        <div class="qm">?</div>
        <div style="width:8px;flex:none"></div>
        <div class="swatch"></div>
        <div style="width:26px;flex:none"></div>
        <svg width="36" height="15" viewBox="0 0 36 15" style="flex:none" fill="none" stroke="#666">
          <path d="M2 7h14M2 11h14M22 13l4-11M27 6h8M27 11h8" />
        </svg>
      </div>
    `;
  }

  render() {
    return html`
      <div class="app">
        <div class="title">
          ${icon('logo', 17)}<span>MIDAS/Civil V 6.7.1 - [<b>无标题</b>] - [<b>模型窗口</b>]</span>
          <span class="stamp">0x0/4:6</span>
          <div class="wins">
            <div class="wbtn"><svg width="9" height="9"><path d="M1 7h7" stroke="#fff" stroke-width="2.500" /></svg></div>
            <div class="wbtn"><svg width="11" height="11" fill="none" stroke="#fff"><path d="M1.500 4.500h6v5h-6zM4 4V1.500h6v5H8" /></svg></div>
            <div class="wbtn close"><svg width="11" height="11"><path d="M1 1l9 9M10 1l-9 9" stroke="#fff" stroke-width="2" /></svg></div>
          </div>
        </div>

        <div class="menu">
          <div class="logo">${icon('logo', 17)}</div>
          ${menus.map(([t, k]) => html`<span class="m">${t}(${k})</span>`)}
          <div class="mdi">
            <div class="mbtn"><svg width="11" height="11"><path d="M1 9h8" stroke="#000" stroke-width="2" /></svg></div>
            <div class="mbtn"><svg width="12" height="12" fill="none" stroke="#000"><path d="M1.500 4.500h7v6h-7zM4 4V1.500h7v6H9" /></svg></div>
            <div class="mbtn"><svg width="12" height="12"><path d="M1 1l10 10M11 1 1 11" stroke="#000" stroke-width="2" /></svg></div>
          </div>
        </div>

        <div class="bar one">${this.renderBar(row1)}</div>
        <div class="bar two">${this.renderBar(row2)}</div>

        <div class="main">
          <div class="left">
            <div class="tabs">
              <div class="tab active" style="width:42px;margin-left:4px">菜单</div>
              <div class="tab" style="width:35px">表格</div>
              <div class="tab" style="width:24px">组</div>
              <div class="tab" style="width:36px">工作</div>
            </div>
            ${this.renderTree()}
          </div>
          ${this.renderSide()}
          <div class="work">
            <div class="docTabs"><div class="docTab">模型窗口</div></div>
            ${this.renderCanvas()}
            ${this.renderBottom()}
          </div>
        </div>

        ${this.renderStatus()}

        <div class="panel">
          <h4>控制</h4>
          <div class="inner">
            <div class="ctrls">
              <div class="pb"><svg width="10" height="10"><path d="M2 0l7 5-7 5z" /></svg></div>
              <div class="pb"><svg width="10" height="10"><path d="M2 1h2v8H2zM6 1h2v8H6z" /></svg></div>
              <div class="pb"><svg width="10" height="10"><path d="M1 1h8v8H1z" /></svg></div>
              <div class="pb skip"><svg width="10" height="10"><path d="M0 1l5 4-5 4zM5 1l5 4-5 4z" /></svg></div>
            </div>
            <div class="track"></div>
            <div class="ticks"><i style="left:0"></i><i style="left:56px"></i></div>
            <div class="readout">帧: 4/498 时间: 0</div>
          </div>
        </div>
      </div>
    `;
  }
}
